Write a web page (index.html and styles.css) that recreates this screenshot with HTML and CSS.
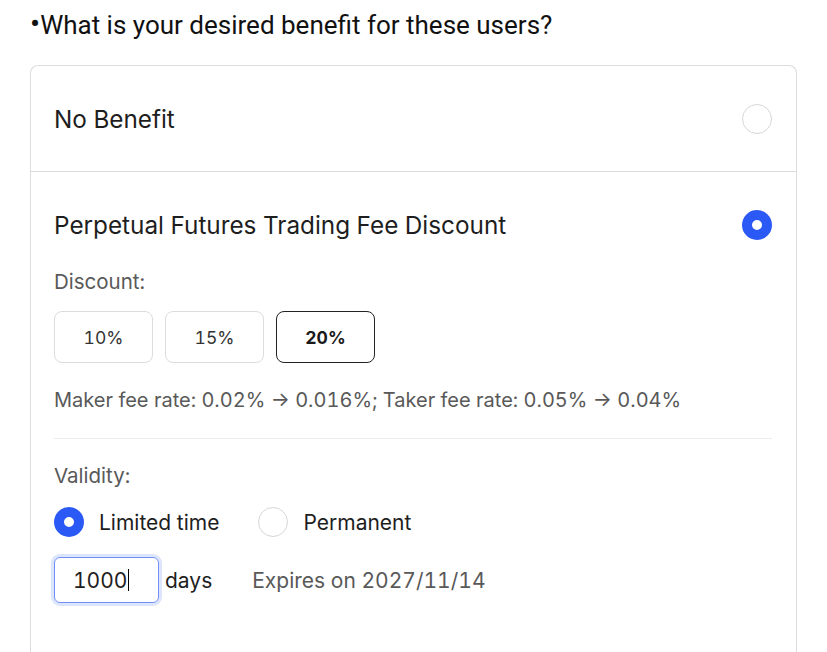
FILE: index.html
```html
<!DOCTYPE html>
<html>
<head>
<meta charset="utf-8">
<link rel="stylesheet" href="styles.css">
</head>
<body>
<div class="page">
  <h2 class="question"><span class="bullet">•</span>What is your desired benefit for these users?</h2>
  <div class="card">
    <div class="option first">
      <div class="option-head">
        <span class="option-title">No Benefit</span>
        <span class="radio"></span>
      </div>
    </div>
    <div class="option">
      <div class="option-head">
        <span class="option-title">Perpetual Futures Trading Fee Discount</span>
        <span class="radio checked"></span>
      </div>
      <div class="label first-label">Discount:</div>
      <div class="chips">
        <button class="chip">10%</button>
        <button class="chip">15%</button>
        <button class="chip active">20%</button>
      </div>
      <div class="fee">Maker fee rate: 0.02% → 0.016%; Taker fee rate: 0.05% → 0.04%</div>
      <div class="sep"></div>
      <div class="label">Validity:</div>
      <div class="radios">
        <label class="ritem"><span class="radio checked"></span>Limited time</label>
        <label class="ritem"><span class="radio"></span>Permanent</label>
      </div>
      <div class="days-row">
        <div class="input"><span>1000</span><span class="caret"></span></div>
        <span class="days">days</span>
        <span class="expires">Expires on 2027/11/14</span>
      </div>
    </div>
  </div>
</div>
</body>
</html>
```
FILE: styles.css
```css
* { box-sizing: border-box; }
html, body { margin: 0; padding: 0; background: #fff; }
body { font-family: Inter, "Noto Sans", sans-serif; color: #1e1e1e; font-variant-numeric: tabular-nums; }
.page { padding: 0 30px; }
.question {
  margin: 0;
  padding-top: 8px;
  font-family: Roboto, "Liberation Sans", sans-serif;
  font-weight: 400;
  font-size: 26px;
  line-height: 32px;
  color: #111;
  height: 65px;
}
.bullet { font-size: 30px; line-height: 32px; }
.card {
  border: 1px solid #dcdcdc;
  border-bottom: none;
  border-radius: 8px 8px 0 0;
  height: 587px;
  overflow: hidden;
}
.option { padding: 0 24px 0 23px; }
.option + .option { border-top: 1px solid #dcdcdc; }
.option-head {
  display: flex;
  align-items: center;
  justify-content: space-between;
  padding-top: 38px;
}
.option.first .option-head { padding-bottom: 37px; }
.option-title { font-size: 24.3px; line-height: 30px; color: #1e1e1e; }
.radio {
  width: 30px; height: 30px;
  border-radius: 50%;
  border: 1px solid #d6d6d6;
  background: #fff;
  display: inline-block;
  flex: none;
}
.radio.checked { border: 10px solid #2b59f6; }
.label { font-size: 20.5px; color: #595959; line-height: 24px; margin-top: 25px; }
.label.first-label { margin-top: 30px; }
.chips { display: flex; gap: 12px; margin-top: 17px; }
.chip {
  width: 99px; height: 52px;
  border: 1px solid #dcdcdc;
  border-radius: 8px;
  background: #fff;
  font-family: Inter, sans-serif;
  font-variant-numeric: tabular-nums;
  font-size: 17.5px;
  color: #333;
  padding: 0;
}
.chip.active { border-color: #222; font-weight: 700; color: #1a1a1a; }
.fee { font-size: 20px; color: #595959; margin-top: 24px; line-height: 26px; }
.sep { height: 1px; background: #ececec; margin-top: 25px; }
.radios { display: flex; gap: 39px; margin-top: 19px; }
.ritem { display: flex; align-items: center; gap: 15px; font-size: 21px; color: #1e1e1e; }
.days-row { display: flex; align-items: center; margin-top: 20px; font-size: 21px; }
.input {
  width: 105px; height: 46px;
  border: 1px solid #6f8ff6;
  border-radius: 6px;
  box-shadow: 0 0 0 3px #dde5fd;
  display: flex; align-items: center;
  padding-left: 18px;
  color: #1e1e1e;
}
.caret { width: 1px; height: 22px; background: #000; margin-left: 1px; }
.days { margin-left: 6px; color: #1e1e1e; }
.expires { margin-left: 40px; color: #595959; }
```
